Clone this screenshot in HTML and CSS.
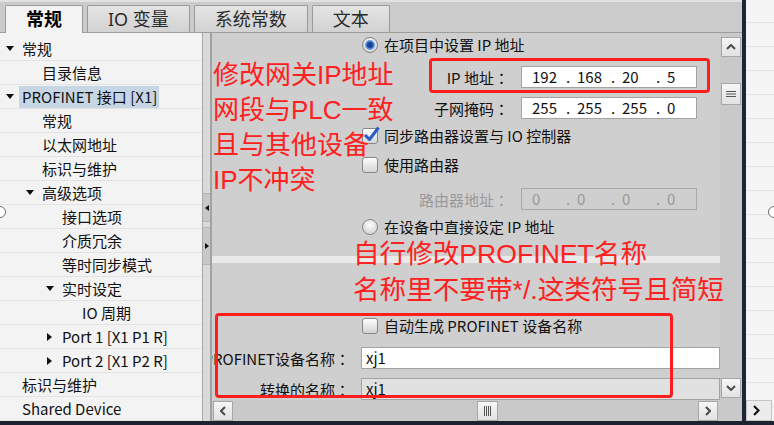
FILE: index.html
```html
<!DOCTYPE html>
<html lang="zh-CN">
<head>
    <meta charset="UTF-8">
    <title>PROFINET 接口 [X1]</title>
    <link rel="stylesheet" href="styles.css">
</head>
<body>
<div class="window">
    <div class="main">
        <div class="tabs">
            <div class="tab active">常规</div>
            <div class="tab">IO 变量</div>
            <div class="tab">系统常数</div>
            <div class="tab">文本</div>
        </div>
        <div class="workspace">
            <ul class="tree">
                <li class="open"><span class="tw"></span>常规</li>
                <li class="lv1"><span class="tw"></span>目录信息</li>
                <li class="open"><span class="tw"></span><span class="sel">PROFINET 接口 [X1]</span></li>
                <li class="lv1"><span class="tw"></span>常规</li>
                <li class="lv1"><span class="tw"></span>以太网地址</li>
                <li class="lv1"><span class="tw"></span>标识与维护</li>
                <li class="lv1 open"><span class="tw"></span>高级选项</li>
                <li class="lv2"><span class="tw"></span>接口选项</li>
                <li class="lv2"><span class="tw"></span>介质冗余</li>
                <li class="lv2"><span class="tw"></span>等时同步模式</li>
                <li class="lv2 open"><span class="tw"></span>实时设定</li>
                <li class="lv3"><span class="tw"></span>IO 周期</li>
                <li class="lv2 closed"><span class="tw"></span>Port 1 [X1 P1 R]</li>
                <li class="lv2 closed"><span class="tw"></span>Port 2 [X1 P2 R]</li>
                <li><span class="tw"></span>标识与维护</li>
                <li><span class="tw"></span>Shared Device</li>
            </ul>

            <div class="splitter">
                <span class="split-btn left"></span>
                <span class="split-btn right"></span>
            </div>

            <div class="editor">
                <div class="content">
                    <div class="opt top"><span class="radio on"></span>在项目中设置 IP 地址</div>
                    <div class="field sp-m">
                        <label>IP 地址<span class="colon">：</span></label>
                        <div class="box ip"><span>192</span><i>.</i><span>168</span><i>.</i><span>20</span><i>.</i><span>5</span></div>
                    </div>
                    <div class="field sp-s">
                        <label>子网掩码<span class="colon">：</span></label>
                        <div class="box ip"><span>255</span><i>.</i><span>255</span><i>.</i><span>255</span><i>.</i><span>0</span></div>
                    </div>
                    <div class="opt sp-s">
                        <span class="check">
                            <svg class="tick" width="18" height="18" viewBox="0 0 18 18"><path d="M3 9 L7.5 13.5 L16.5 1.5" fill="none" stroke="#2a5cc6" stroke-width="3" stroke-linejoin="round"/></svg>
                        </span>同步路由器设置与 IO 控制器
                    </div>
                    <div class="opt sp-m"><span class="check"></span>使用路由器</div>
                    <div class="field sp-l">
                        <label class="muted">路由器地址<span class="colon">：</span></label>
                        <div class="box ip off"><span>0</span><i>.</i><span>0</span><i>.</i><span>0</span><i>.</i><span>0</span></div>
                    </div>
                    <div class="opt sp-s"><span class="radio"></span>在设备中直接设定 IP 地址</div>

                    <div class="band"></div>

                    <div class="opt sp-xl"><span class="check"></span>自动生成 PROFINET 设备名称</div>
                    <div class="field wide sp-m">
                        <label>PROFINET设备名称<span class="colon">：</span></label>
                        <div class="box">xj1</div>
                    </div>
                    <div class="field wide sp-s">
                        <label>转换的名称<span class="colon">：</span></label>
                        <div class="box ro">xj1</div>
                    </div>
                </div>

                <div class="vscroll">
                    <span class="sbtn"><svg width="10" height="6" viewBox="0 0 10 6"><path d="M1 5 L5 1 L9 5" fill="none" stroke="#4a4a4a" stroke-width="2"/></svg></span>
                    <span class="sbtn thumb"><svg width="10" height="8" viewBox="0 0 10 8"><path d="M0 1.5H10M0 4H10M0 6.5H10" stroke="#555" stroke-width="1"/></svg></span>
                    <span class="sbtn"><svg width="10" height="6" viewBox="0 0 10 6"><path d="M1 1 L5 5 L9 1" fill="none" stroke="#4a4a4a" stroke-width="2"/></svg></span>
                </div>
                <div class="hscroll">
                    <span class="sbtn"><svg width="6" height="10" viewBox="0 0 6 10"><path d="M5 1 L1 5 L5 9" fill="none" stroke="#4a4a4a" stroke-width="2"/></svg></span>
                    <span class="sbtn thumb"><svg width="8" height="10" viewBox="0 0 8 10"><path d="M0.5 0V10M2.5 0V10M4.5 0V10M6.5 0V10" stroke="#555" stroke-width="1"/></svg></span>
                    <span class="sbtn"><svg width="6" height="10" viewBox="0 0 6 10"><path d="M1 1 L5 5 L1 9" fill="none" stroke="#4a4a4a" stroke-width="2"/></svg></span>
                </div>
                <div class="corner"></div>

                <div class="note note-ip">修改网关IP地址<br>网段与PLC一致<br>且与其他设备<br>IP不冲突</div>
                <div class="mark mark-ip"></div>
                <div class="note note-name">自行修改PROFINET名称<br>名称里不要带*/.这类符号且简短</div>
                <div class="mark mark-name"></div>
            </div>
        </div>
    </div>

    <div class="divider"></div>

    <div class="side">
        <div class="side-list"></div>
        <div class="side-btn"><svg width="7" height="11" viewBox="0 0 7 11"><path d="M1 1 L5.5 5.5 L1 10" fill="none" stroke="#111" stroke-width="2.2"/></svg></div>
    </div>

    <span class="handle l"></span>
    <span class="handle r"></span>
</div>
</body>
</html>
```

FILE: styles.css
```css
* {
    margin: 0;
    padding: 0;
    box-sizing: border-box;
}

body {
    width: 774px;
    height: 425px;
    overflow: hidden;
    background: #1d2130;
    font-family: "Noto Sans CJK SC", sans-serif;
    font-size: 15px;
    color: #111;
}

.window {
    position: relative;
    height: 421px;
    display: flex;
}

.main {
    width: 742px;
    flex: none;
    display: flex;
    flex-direction: column;
}

/* tab strip */
.tabs {
    height: 33px;
    flex: none;
    display: flex;
    align-items: flex-start;
    gap: 4px;
    padding: 5px 0 0 5px;
    background: linear-gradient(#e2e2e2 0 2px, #cbcbcb 2px);
    border-bottom: 1px solid #9d9d9d;
}

.tab {
    height: 27px;
    padding: 0 20px;
    font-family: "Noto Sans", "Noto Sans CJK SC", sans-serif;
    font-size: 18px;
    line-height: 26px;
    color: #2a2a2a;
    background: linear-gradient(#e4e4e4, #d2d2d2);
    border: 1px solid #9a9a9a;
    border-bottom: 0;
    border-radius: 2px 2px 0 0;
}

.tab.active {
    height: 28px;
    background: #f3f3f3;
    font-weight: bold;
    color: #000;
}

.workspace {
    flex: 1;
    min-height: 0;
    display: flex;
}

/* tree */
.tree {
    width: 202px;
    flex: none;
    list-style: none;
    padding-top: 4px;
    background: #f3f3f3;
    overflow: hidden;
}

.tree li {
    height: 24px;
    display: flex;
    align-items: center;
    padding-left: 2px;
    border-bottom: 1px solid #e3e3e3;
    white-space: nowrap;
    line-height: 23px;
}

.tree li.lv1 { padding-left: 22px; }
.tree li.lv2 { padding-left: 42px; }
.tree li.lv3 { padding-left: 62px; }

.tw {
    width: 20px;
    flex: none;
    display: flex;
    align-items: center;
}

.open .tw::before {
    content: "";
    margin-left: 4px;
    border-left: 4px solid transparent;
    border-right: 4px solid transparent;
    border-top: 5px solid #111;
}

.closed .tw::before {
    content: "";
    margin-left: 5px;
    border-top: 4.5px solid transparent;
    border-bottom: 4.5px solid transparent;
    border-left: 5px solid #111;
}

.sel {
    margin-left: -3px;
    padding: 0 2px 0 3px;
    line-height: 22px;
    background: #c7d6e4;
}

/* splitter between tree and editor */
.splitter {
    width: 10px;
    flex: none;
    display: flex;
    flex-direction: column;
    padding-top: 160px;
    background: #dadada;
    border-left: 1px solid #a9a9a9;
    border-right: 2px solid #a2a2a2;
}

.split-btn {
    height: 29px;
    display: flex;
    align-items: center;
    justify-content: center;
    background: #c8c8c8;
    border-top: 1px solid #b6b6b6;
    border-bottom: 1px solid #b6b6b6;
}

.split-btn.right {
    height: 38px;
    margin-top: 5px;
}

.split-btn.left::before {
    content: "";
    border-top: 3.5px solid transparent;
    border-bottom: 3.5px solid transparent;
    border-right: 4px solid #111;
}

.split-btn.right::before {
    content: "";
    border-top: 3.5px solid transparent;
    border-bottom: 3.5px solid transparent;
    border-left: 4px solid #111;
}

/* editor */
.editor {
    flex: 1;
    position: relative;
    display: grid;
    grid-template-columns: 1fr 22px;
    grid-template-rows: 1fr 21px;
    background: #c9c9c9;
}

.content {
    position: relative;
    overflow: hidden;
    background: #cfcfcf;
}

.opt {
    height: 16px;
    margin-left: 150px;
    display: flex;
    align-items: center;
    gap: 6px;
    line-height: 16px;
    white-space: nowrap;
}

.top { margin-top: 4px; }
.sp-s { margin-top: 9px; }
.sp-m { margin-top: 13px; }
.sp-l { margin-top: 15px; }
.sp-xl { margin-top: 55px; }

.radio {
    width: 16px;
    height: 16px;
    flex: none;
    position: relative;
    border-radius: 50%;
    border: 1px solid #858585;
    background: radial-gradient(circle at 50% 35%, #ffffff, #d6d6d6 75%);
}

.radio.on::after {
    content: "";
    position: absolute;
    inset: 2px;
    border-radius: 50%;
    background: radial-gradient(circle, #17449a 0 35%, #5b8fd8 55%, #b9d2f0 100%);
}

.check {
    width: 16px;
    height: 16px;
    flex: none;
    position: relative;
    border: 1px solid #868686;
    border-radius: 3px;
    background: linear-gradient(#fdfdfd, #d4d4d4);
}

.tick {
    position: absolute;
    left: -1px;
    top: -3px;
}

.field {
    height: 22px;
    display: flex;
}

.field label {
    width: 309px;
    flex: none;
    display: flex;
    justify-content: flex-end;
    align-items: center;
    padding-right: 12px;
    white-space: nowrap;
}

.field.wide label {
    width: 149px;
    padding-right: 11px;
}

/* centred full-width colon, as the original UI draws it */
.colon {
    font-family: "Noto Sans CJK JP", "Noto Sans CJK SC", sans-serif;
}

.muted {
    color: #9a9a9a;
}

.box {
    width: 176px;
    height: 22px;
    padding-left: 10px;
    border: 1px solid #a3a3a3;
    background: #fff;
    line-height: 20px;
    white-space: nowrap;
}

.field.wide .box {
    flex: 1;
    width: auto;
    padding-left: 4px;
}

.ip span {
    display: inline-block;
    width: 34px;
}

.ip i {
    display: inline-block;
    width: 11px;
    font-style: normal;
}

.box.off {
    background: transparent;
    border-color: #a9a9a9;
    color: #999;
}

.box.ro {
    background: #e1e1e1;
}

.band {
    height: 7px;
    margin-top: 21px;
    background: #e9e9e9;
}

/* scrollbars */
.vscroll {
    display: flex;
    flex-direction: column;
    align-items: center;
    padding: 4px 0 2px;
    background: #c9c9c9;
}

.sbtn {
    width: 20px;
    height: 20px;
    flex: none;
    display: flex;
    align-items: center;
    justify-content: center;
    border: 1px solid #a7a7a7;
    background: linear-gradient(#f6f6f6, #e2e2e2);
}

.vscroll .thumb {
    margin-top: 26px;
    height: 22px;
}

.vscroll .sbtn:last-child {
    margin-top: auto;
}

.hscroll {
    display: flex;
    align-items: center;
    padding: 0 2px 0 1px;
    background: #c9c9c9;
}

.hscroll .thumb {
    margin-left: 244px;
    width: 21px;
}

.hscroll .sbtn:last-child {
    margin-left: auto;
}

.corner {
    background: #c9c9c9;
}

/* red notes drawn over the screenshot */
.note {
    position: absolute;
    color: #ff2020;
    font-family: "Liberation Sans", "Noto Sans CJK SC", sans-serif;
    font-size: 26px;
    white-space: nowrap;
}

.note-ip {
    left: 1px;
    top: 25px;
    line-height: 35px;
}

.note-name {
    left: 141px;
    top: 203px;
    font-size: 26.6px;
    line-height: 36px;
}

.mark {
    position: absolute;
    border: 3px solid #ff1e1e;
    border-radius: 4px;
}

.mark-ip {
    left: 217px;
    top: 25px;
    width: 281px;
    height: 35px;
}

.mark-name {
    left: 3px;
    top: 280px;
    width: 458px;
    height: 85px;
}

/* right docked panel */
.divider {
    width: 4px;
    flex: none;
    background: #1f2535;
}

.side {
    flex: 1;
    display: flex;
    flex-direction: column;
    background: repeating-linear-gradient(#f4f4f4 0 22px, #e3e3e3 22px 23px, #f4f4f4 23px 24px);
}

.side-list {
    flex: 1;
}

.side-btn {
    width: 26px;
    height: 21px;
    display: flex;
    align-items: center;
    padding-left: 6px;
    border: 1px solid #c4c4c4;
    background: #ececec;
}

.handle {
    position: absolute;
    top: 206px;
    width: 12px;
    height: 12px;
    border-radius: 50%;
    border: 1px solid #707070;
    background: #fff;
}

.handle.l { left: -6px; }
.handle.r { left: 768px; }
```
